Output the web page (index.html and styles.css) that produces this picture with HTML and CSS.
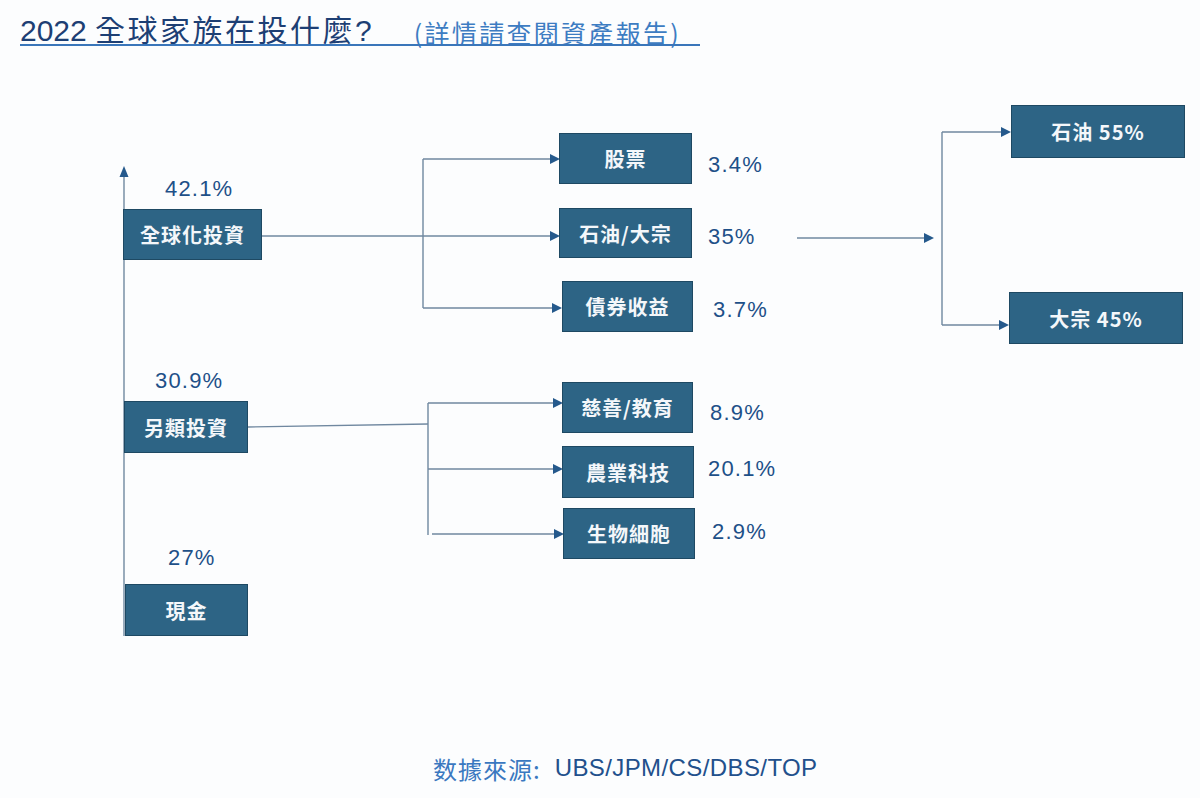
FILE: index.html
```html
<!DOCTYPE html>
<html lang="zh-Hant">
<head>
<meta charset="utf-8">
<title>2022 全球家族在投什麼?</title>
<link rel="stylesheet" href="styles.css">
</head>
<body>
<div class="page">
  <header class="title">
    <h1 class="t-main"><span class="num">2022</span> <span class="cjk">全球家族在投什麼</span>?</h1>
    <span class="t-sub">(詳情請查閱資產報告)</span>
  </header>

  <div class="diagram">
    <svg class="wires" width="1200" height="680" viewBox="0 0 1200 680" xmlns="http://www.w3.org/2000/svg">
      <g fill="none" stroke="#7088a0" stroke-width="1.4">
        <path d="M124 116 V576"/>
        <path d="M262 176 H552"/>
        <path d="M423 99 V248 M423 99 H551 M423 248 H553"/>
        <path d="M248 367 L428 364"/>
        <path d="M428 343 V475 M428 343 H554 M428 409 H554 M432 474 H555"/>
        <path d="M797 178 H925"/>
        <path d="M942 72 V265 M942 72 H1002 M942 265 H1000"/>
      </g>
      <g fill="#25598c">
        <polygon points="124,106 119.5,117 128.5,117"/>
        <polygon points="560,176 550,171 550,181"/>
        <polygon points="560,99 550,94 550,104"/>
        <polygon points="562,248 552,243 552,253"/>
        <polygon points="563,343 553,338 553,348"/>
        <polygon points="563,409 553,404 553,414"/>
        <polygon points="564,474 554,469 554,479"/>
        <polygon points="934,178 924,173 924,183"/>
        <polygon points="1011,72 1001,67 1001,77"/>
        <polygon points="1009,265 999,260 999,270"/>
      </g>
    </svg>

    <div class="node n-global">全球化投資</div>
    <div class="node n-alt">另類投資</div>
    <div class="node n-cash">現金</div>
    <div class="node n-stock">股票</div>
    <div class="node n-oilc">石油/大宗</div>
    <div class="node n-bond">債券收益</div>
    <div class="node n-char">慈善/教育</div>
    <div class="node n-agri">農業科技</div>
    <div class="node n-bio">生物細胞</div>
    <div class="node n-oil">石油 55%</div>
    <div class="node n-comm">大宗 45%</div>

    <span class="pct p-global">42.1%</span>
    <span class="pct p-alt">30.9%</span>
    <span class="pct p-cash">27%</span>
    <span class="pct p-stock">3.4%</span>
    <span class="pct p-oilc">35%</span>
    <span class="pct p-bond">3.7%</span>
    <span class="pct p-char">8.9%</span>
    <span class="pct p-agri">20.1%</span>
    <span class="pct p-bio">2.9%</span>
  </div>

  <footer class="source">
    <span class="src-label">数據來源:</span><span class="src-list">UBS/JPM/CS/DBS/TOP</span>
  </footer>
</div>
</body>
</html>
```
FILE: styles.css
```css
* { box-sizing: border-box; }

html, body {
  margin: 0;
  padding: 0;
  background: #fcfdfe;
}

.page {
  width: 1200px;
  height: 798px;
  overflow: hidden;
  display: flex;
  flex-direction: column;
  font-family: "Liberation Sans", "Noto Sans CJK TC", Arial, sans-serif;
}

/* ---------- title ---------- */
.title {
  height: 60px;
  display: flex;
  align-items: flex-end;
  margin-left: 20px;
  width: 680px;
  padding-bottom: 14px;
  position: relative;
}
.title::after {
  content: "";
  position: absolute;
  left: 0;
  right: 0;
  top: 44px;
  height: 2px;
  background: #3a76ba;
}

.t-main {
  margin: 0;
  font-size: 30px;
  font-weight: 400;
  line-height: 30px;
  color: #1d3f74;
  font-family: "Liberation Sans", "Noto Sans CJK TC", sans-serif;
  white-space: nowrap;
}
.t-main .cjk {
  font-family: "Noto Sans CJK TC", sans-serif;
  letter-spacing: 2.5px;
}

.t-sub {
  margin-left: 42px;
  font-size: 25px;
  line-height: 28px;
  letter-spacing: 2.3px;
  color: #3d7cc2;
  font-family: "Noto Sans CJK TC", sans-serif;
  white-space: nowrap;
}

/* ---------- diagram ---------- */
.diagram {
  position: relative;
  height: 680px;
  flex: none;
}

.wires {
  position: absolute;
  left: 0;
  top: 0;
}

.node {
  position: absolute;
  display: flex;
  align-items: center;
  justify-content: center;
  background: #2d6485;
  border: 1px solid #1e4963;
  color: #f4f7fa;
  font-family: "Noto Sans CJK TC", sans-serif;
  font-weight: 700;
  font-size: 20px;
  letter-spacing: 1px;
  white-space: nowrap;
}

.n-global { left: 123px; top: 149px; width: 139px; height: 51px; }
.n-alt    { left: 124px; top: 341px; width: 124px; height: 52px; }
.n-cash   { left: 125px; top: 524px; width: 123px; height: 52px; }
.n-stock  { left: 559px; top: 73px;  width: 133px; height: 51px; }
.n-oilc   { left: 559px; top: 148px; width: 133px; height: 50px; }
.n-bond   { left: 562px; top: 221px; width: 131px; height: 51px; }
.n-char   { left: 562px; top: 322px; width: 131px; height: 51px; }
.n-agri   { left: 562px; top: 386px; width: 132px; height: 52px; }
.n-bio    { left: 563px; top: 448px; width: 132px; height: 51px; }
.n-oil    { left: 1011px; top: 45px; width: 174px; height: 53px; }
.n-comm   { left: 1009px; top: 232px; width: 174px; height: 52px; }

.pct {
  position: absolute;
  font-size: 22px;
  line-height: 26px;
  letter-spacing: 1.2px;
  color: #1e5088;
  white-space: nowrap;
}

.p-global { left: 165px; top: 116px; }
.p-alt    { left: 155px; top: 308px; }
.p-cash   { left: 168px; top: 485px; }
.p-stock  { left: 708px; top: 92px; }
.p-oilc   { left: 708px; top: 164px; }
.p-bond   { left: 713px; top: 237px; }
.p-char   { left: 710px; top: 340px; }
.p-agri   { left: 708px; top: 396px; }
.p-bio    { left: 712px; top: 459px; }

/* ---------- footer ---------- */
.source {
  flex: 1;
  display: flex;
  align-items: center;
  padding-left: 433px;
  padding-bottom: 2px;
  font-size: 24px;
  white-space: nowrap;
}
.src-label {
  font-family: "Noto Sans CJK TC", sans-serif;
  color: #3a78c0;
  letter-spacing: 1px;
}
.src-list {
  margin-left: 14px;
  font-family: "Liberation Sans", sans-serif;
  color: #22508c;
  letter-spacing: 0.4px;
}
```
